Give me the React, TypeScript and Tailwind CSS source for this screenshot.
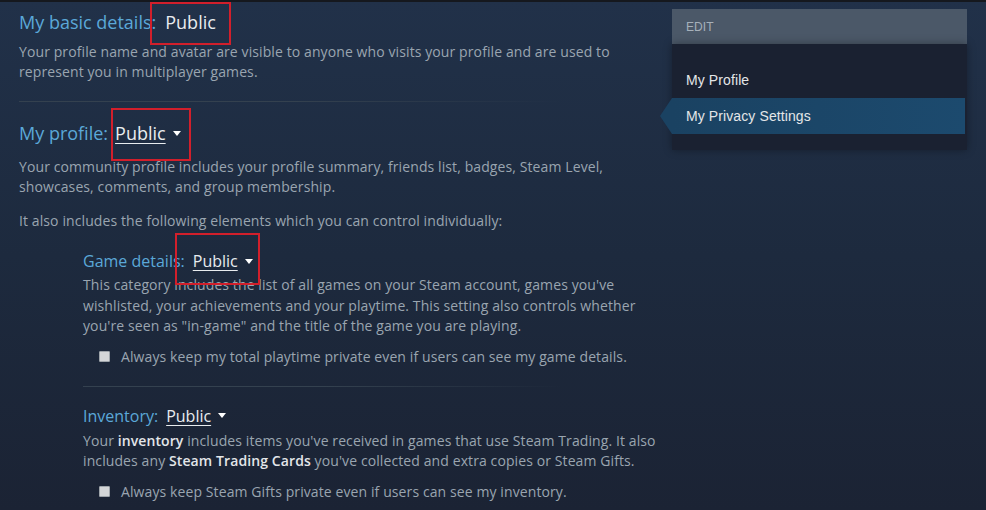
import React from "react";

function Arrow() {
  return (
    <svg width="8" height="5" viewBox="0 0 8 5" className="ml-[7px] inline-block">
      <path d="M0 0 L8 0 L4 5 Z" fill="#ffffff" />
    </svg>
  );
}

function Check({ label }: { label: string }) {
  return (
    <div className="flex items-center gap-[11px] pl-4 leading-[20px]">
      <span className="h-[11px] w-[11px] rounded-[1px] border border-[#9ea4aa] bg-[#d4d6d8]" />
      <span>{label}</span>
    </div>
  );
}

export default function App() {
  return (
    <div
      className="relative h-[510px] w-[986px] overflow-hidden bg-gradient-to-b from-[#213149] via-[#1d2a3e] to-[#1b2334] text-[14px] tracking-[0.1px] text-[#9aa5b0]"
      style={{ fontFamily: '"Open Sans", Arial, sans-serif' }}
    >
      <div className="h-[2px] bg-[#15181e]" />
      <div className="flex">
        <div className="w-[665px] shrink-0 pl-[19px]">
          <div className="mt-[9px] flex items-center text-[18px] leading-[22px] tracking-normal text-[#5ba8d8]">
            My basic details:
            <span className="ml-[9px] text-[#e8ecef]">Public</span>
          </div>
          <p className="mt-[9px] leading-[20px]">
            Your profile name and avatar are visible to anyone who visits your profile and are used to represent you in multiplayer games.
          </p>
          <div className="mt-[19px] h-px w-[545px] bg-gradient-to-r from-[#34414f] via-[#34414f] to-transparent" />
          <div className="mt-[20px] flex items-center text-[18px] leading-[22px] tracking-normal text-[#5ba8d8]">
            My profile:
            <span className="ml-[7px] text-[#e8ecef] underline underline-offset-[3px]">Public</span>
            <Arrow />
          </div>
          <p className="mt-[13px] leading-[20px]">
            Your community profile includes your profile summary, friends list, badges, Steam Level, showcases, comments, and group membership.
          </p>
          <p className="mt-[14px] leading-[20px]">It also includes the following elements which you can control individually:</p>

          <div className="pl-[64px]">
            <div className="mt-[20px] flex items-center text-[16px] leading-[20px] tracking-normal text-[#5ba8d8]">
              Game details:
              <span className="ml-[8px] text-[#e8ecef] underline underline-offset-[3px]">Public</span>
              <Arrow />
            </div>
            <p className="mt-[4px] leading-[20.5px]">
              This category includes the list of all games on your Steam account, games you've wishlisted, your achievements and your playtime. This setting also controls whether you're seen as "in-game" and the title of the game you are playing.
            </p>
            <div className="mt-[10px]">
              <Check label="Always keep my total playtime private even if users can see my game details." />
            </div>
            <div className="mt-[19px] h-px w-[480px] bg-gradient-to-r from-[#34414f] via-[#34414f] to-transparent" />
            <div className="mt-[19px] flex items-center text-[16px] leading-[20px] tracking-normal text-[#5ba8d8]">
              Inventory:
              <span className="ml-[8px] text-[#e8ecef] underline underline-offset-[3px]">Public</span>
              <Arrow />
            </div>
            <p className="mt-[5px] leading-[20px]">
              Your <b className="font-semibold text-[#e3e6e9]">inventory</b> includes items you've received in games that use Steam Trading. It also includes any <b className="font-semibold text-[#e3e6e9]">Steam Trading Cards</b> you've collected and extra copies or Steam Gifts.
            </p>
            <div className="mt-[11px]">
              <Check label="Always keep Steam Gifts private even if users can see my inventory." />
            </div>
          </div>
        </div>

        <div className="ml-[7px] mt-[7px] w-[295px] shrink-0" style={{ fontFamily: '"Liberation Sans", Arial, sans-serif' }}>
          <div className="flex h-[35px] items-center bg-[#4b5868] pl-[14px] text-[12px] text-[#a6b0ba]">EDIT</div>
          <div className="bg-[#1a2131] pb-[16px] pt-[18px] shadow-[0_0_8px_rgba(0,0,0,0.35)]">
            <div className="flex h-[36px] items-center pl-[14px] text-[14px] text-[#e4e6e8]">My Profile</div>
            <div className="relative mr-[2px] flex h-[36px] items-center bg-gradient-to-r from-[#1a4262] to-[#1c4a6e] pl-[14px] text-[14px] text-[#e4e6e8]">
              <span className="absolute left-[-12px] top-0 h-0 w-0 border-y-[18px] border-r-[12px] border-y-transparent border-r-[#1a4262]" />
              My Privacy Settings
            </div>
          </div>
        </div>
      </div>

      <div className="absolute left-[150px] top-[2px] h-[43px] w-[81px] border-2 border-[#d21f2b]" />
      <div className="absolute left-[111px] top-[108px] h-[53px] w-[80px] border-2 border-[#d21f2b]" />
      <div className="absolute left-[175px] top-[233px] h-[52px] w-[85px] border-2 border-[#d21f2b]" />
    </div>
  );
}
